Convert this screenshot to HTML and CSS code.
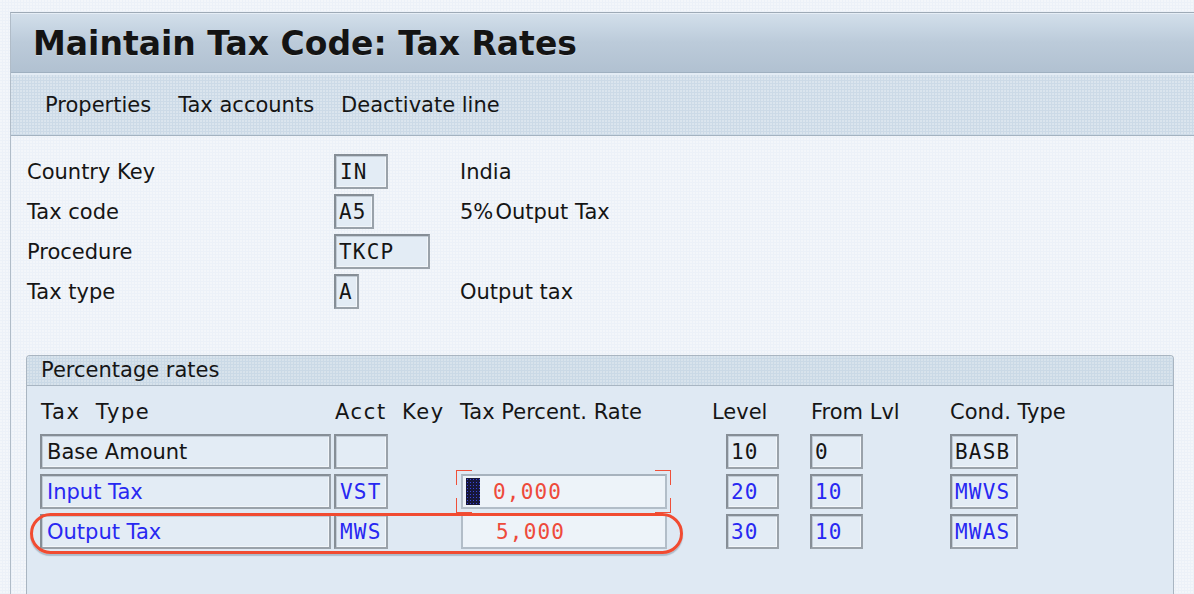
FILE: index.html
```html
<!DOCTYPE html>
<html lang="en">
<head>
<meta charset="utf-8">
<title>Maintain Tax Code: Tax Rates</title>
<link rel="stylesheet" href="styles.css">
</head>
<body>
<div class="window">
  <div class="titlebar"><h1>Maintain Tax Code: Tax Rates</h1></div>
  <div class="toolbar">
    <span>Properties</span>
    <span>Tax accounts</span>
    <span>Deactivate line</span>
  </div>
  <div class="content">
    <div class="form">
      <div class="label">Country Key</div>
      <div><span class="f mono w54">IN</span></div>
      <div class="desc">India</div>

      <div class="label">Tax code</div>
      <div><span class="f mono w40">A5</span></div>
      <div class="desc">5%&#8202;Output Tax</div>

      <div class="label">Procedure</div>
      <div><span class="f mono w96">TKCP</span></div>
      <div class="desc"></div>

      <div class="label">Tax type</div>
      <div><span class="f mono w25">A</span></div>
      <div class="desc">Output tax</div>
    </div>

    <section class="group">
      <div class="group-head">Percentage rates</div>
      <div class="table">
        <div class="th spaced">Tax Type</div>
        <div class="th spaced">Acct Key</div>
        <div class="th th-rate">Tax Percent. Rate</div>
        <div class="th th-level">Level</div>
        <div class="th th-from">From Lvl</div>
        <div class="th">Cond. Type</div>

        <div><span class="f w291">Base Amount</span></div>
        <div><span class="f mono w54"></span></div>
        <div></div>
        <div><span class="f mono w53">10</span></div>
        <div><span class="f mono w53">0</span></div>
        <div><span class="f mono w68">BASB</span></div>

        <div><span class="f w291 blue">Input Tax</span></div>
        <div><span class="f mono w54 blue">VST</span></div>
        <div class="rate-cell">
          <span class="pct mono red"><span class="cursor"></span><span class="pct-val">0,000</span></span>
          <span class="focus"><i class="c tl"></i><i class="c tr"></i><i class="c bl"></i><i class="c br"></i></span>
        </div>
        <div><span class="f mono w53 blue">20</span></div>
        <div><span class="f mono w53 blue">10</span></div>
        <div><span class="f mono w68 blue">MWVS</span></div>

        <div><span class="f w291 blue">Output Tax</span></div>
        <div><span class="f mono w54 blue">MWS</span></div>
        <div><span class="pct mono red"><span class="pct-val indent">5,000</span></span></div>
        <div><span class="f mono w53 blue">30</span></div>
        <div><span class="f mono w53 blue">10</span></div>
        <div><span class="f mono w68 blue">MWAS</span></div>

        <div class="oval"></div>
      </div>
    </section>
  </div>
</div>
</body>
</html>
```

FILE: styles.css
```css
html, body {
  margin: 0;
  padding: 0;
}

body {
  width: 1194px;
  height: 594px;
  overflow: hidden;
  background-color: #ecf1f8;
  background-image: radial-gradient(circle at 1px 1px, rgba(255,255,255,0.55) 0.6px, transparent 0.9px);
  background-size: 3px 3px;
  font-family: "DejaVu Sans", "Noto Sans", sans-serif;
  font-size: 21px;
  color: #151515;
}

.window {
  margin: 12px 0 0 10px;
  height: 582px;
  box-sizing: border-box;
  overflow: hidden;
  border-top: 1px solid #9eaab6;
  border-left: 1px solid #b0bcc8;
}

.titlebar {
  height: 58px;
  box-sizing: content-box;
  display: flex;
  align-items: center;
  padding-left: 22px;
  border-top: 1px solid #e6eef6;
  border-bottom: 1px solid #9fb0c0;
  background: linear-gradient(#d2deea 0px, #cad8e5 10px, #bccbda 28px, #b1c1d1 58px);
}

.titlebar h1 {
  margin: 0;
  font-size: 33px;
  font-weight: 700;
  color: #141414;
  text-shadow: 0 1px 0 rgba(255,255,255,0.35);
}

.toolbar {
  height: 60px;
  display: flex;
  align-items: center;
  gap: 27px;
  padding-left: 34px;
  border-top: 2px solid #e3ecf5;
  border-bottom: 1px solid #a3b2c0;
  background-color: #ccdae7;
  background-image: radial-gradient(circle at 1px 1px, rgba(255,255,255,0.45) 0.6px, transparent 0.9px);
  background-size: 3px 3px;
  font-size: 21px;
}

.content {
  padding: 18px 0 0 16px;
}

.form {
  display: grid;
  grid-template-columns: 307px 126px auto;
  grid-auto-rows: 35px;
  row-gap: 5px;
  align-items: center;
}

.form > div {
  display: flex;
  align-items: center;
  height: 35px;
}

.mono {
  font-family: "DejaVu Sans Mono", "Liberation Mono", monospace;
  font-size: 21px;
  letter-spacing: 1.2px;
}

.f {
  box-sizing: border-box;
  height: 35px;
  display: flex;
  align-items: center;
  padding-left: 5px;
  border: 2px solid #9aa2aa;
  border-top-color: #868e96;
  border-left-color: #868e96;
  background: #e3ecf5;
  box-shadow: inset 1px 1px 0 #c2ccd6, inset -1px -1px 0 #f2f6fa;
  white-space: pre;
}

.w25 { width: 25px; padding-left: 3px; }
.w40 { width: 40px; padding-left: 3px; }
.w53 { width: 53px; padding-left: 3px; }
.w54 { width: 54px; padding-left: 4px; }
.w68 { width: 68px; padding-left: 3px; }
.w96 { width: 96px; padding-left: 3px; }
.w291 { width: 291px; padding-left: 5px; }

.blue { color: #2828f2; }
.red { color: #ee4a3b; }

.group {
  margin: 46px 20px 0 -1px;
  height: 240px;
  border: 1px solid #a9b5c1;
  border-bottom: none;
  border-radius: 4px 4px 0 0;
  background-color: #dfe9f3;
}

.group-head {
  height: 29px;
  line-height: 29px;
  padding-left: 14px;
  border-bottom: 1px solid #a8b5c2;
  border-radius: 3px 3px 0 0;
  background-color: #cad9e6;
  background-image: radial-gradient(circle at 1px 1px, rgba(255,255,255,0.4) 0.6px, transparent 0.9px);
  background-size: 3px 3px;
  font-size: 21px;
}

.table {
  position: relative;
  display: grid;
  grid-template-columns: 294px 127px 265px 84px 140px 1fr;
  grid-template-rows: 29px 35px 35px 35px;
  row-gap: 5px;
  padding: 14px 0 0 13px;
}

.th {
  align-self: start;
  height: 24px;
  line-height: 24px;
  white-space: nowrap;
  font-size: 21px;
}

.spaced {
  letter-spacing: 1.6px;
  word-spacing: 7px;
  padding-left: 1px;
}

.th-rate { margin-left: -1px; }
.th-level { margin-left: -14px; }
.th-from { margin-left: 1px; }

.rate-cell {
  position: relative;
}

.pct {
  box-sizing: border-box;
  width: 206px;
  height: 35px;
  display: flex;
  align-items: center;
  padding-left: 3px;
  border: 2px solid #b2bdc8;
  border-top-color: #a7b2bd;
  background: #edf3f9;
}

.cursor {
  width: 14px;
  height: 27px;
  background-color: #16173a;
  background-image: radial-gradient(circle, #3a46d8 0.7px, transparent 1px);
  background-size: 3px 3px;
}

.pct-val {
  margin-left: 13px;
}

.pct-val.indent {
  margin-left: 30px;
}

.focus {
  position: absolute;
  left: -5px;
  top: -4px;
  width: 215px;
  height: 43px;
  pointer-events: none;
}

.c {
  position: absolute;
  width: 15px;
  height: 14px;
  border: 0 solid #ef5039;
}

.tl { left: 0; top: 0; border-top-width: 1.5px; border-left-width: 1.5px; }
.tr { right: 0; top: 0; border-top-width: 1.5px; border-right-width: 1.5px; }
.bl { left: 0; bottom: 0; border-bottom-width: 1.5px; border-left-width: 1.5px; }
.br { right: 0; bottom: 0; border-bottom-width: 1.5px; border-right-width: 1.5px; }

.oval {
  position: absolute;
  left: 3px;
  top: 127px;
  width: 653px;
  height: 41px;
  box-sizing: border-box;
  border: 3px solid #f14b31;
  border-radius: 21px;
  box-shadow: 0 2px 1px rgba(110, 130, 150, 0.45);
  pointer-events: none;
}
```
